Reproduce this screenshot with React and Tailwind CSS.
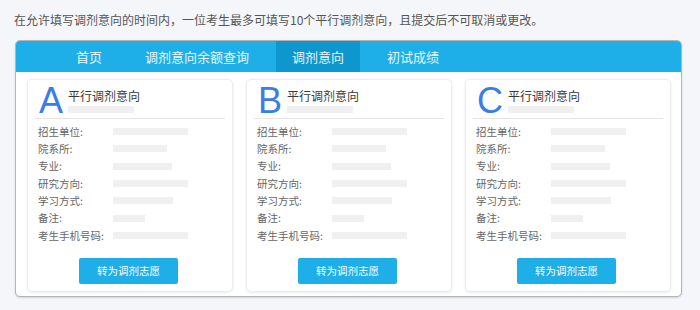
import React from "react";

const rows = [
  ["招生单位:", 75],
  ["院系所:", 54],
  ["专业:", 59],
  ["研究方向:", 75],
  ["学习方式:", 60],
  ["备注:", 32],
  ["考生手机号码:", 75],
];

function Card({ letter }) {
  return (
    <div className="w-[206px] h-[213px] bg-white rounded-[5px] border border-[#ececec] shadow-[0_1px_3px_rgba(0,0,0,0.08)] flex flex-col">
      <div className="mx-[7px] pt-[3px] h-[39px] border-b border-[#e6e6e6] flex items-start">
        <div
          className="ml-[4px] text-[36px] leading-[36px] h-[36px] text-[#3b7de3]"
          style={{ fontFamily: '"Liberation Sans", Arial, sans-serif' }}
        >
          {letter}
        </div>
        <div className="ml-[5px] flex flex-col pt-[5px]">
          <div className="text-[12px] leading-[16px] text-[#3a3a3a]">平行调剂意向</div>
          <div className="mt-[2px] w-[66px] h-[7px] bg-[#f0f0f0]" />
        </div>
      </div>
      <div className="pt-[4px] flex flex-col">
        {rows.map(([label, w]) => (
          <div key={label} className="h-[17.3px] flex items-center">
            <div className="pl-[10px] w-[85px] text-[10.5px] text-[#666] whitespace-nowrap">{label}</div>
            <div className="h-[7px] bg-[#f0f0f0]" style={{ width: w }} />
          </div>
        ))}
      </div>
      <div className="mt-[14px] ml-[51px] w-[99px] h-[26px] bg-[#1eaee8] rounded-[2px] flex items-center justify-center text-white text-[10.5px]">
        转为调剂志愿
      </div>
    </div>
  );
}

export default function App() {
  return (
    <div
      className="w-[700px] h-[310px] bg-[#f5f6fa] overflow-hidden"
      style={{ fontFamily: '"Noto Sans CJK SC", "Noto Sans", sans-serif' }}
    >
      <div className="pt-[11px] pl-[14px] text-[12px] leading-[18px] text-[#555] whitespace-nowrap">
        在允许填写调剂意向的时间内，一位考生最多可填写10个平行调剂意向，且提交后不可取消或更改。
      </div>
      <div className="mt-[11px] ml-[15px] w-[667px] h-[257px] bg-white border border-[#b5b5b5] rounded-[5px] shadow-[0_1px_2px_rgba(0,0,0,0.15)] overflow-hidden">
        <div className="h-[31px] bg-[#1eaee8] flex items-stretch pl-[44px] gap-[11px] text-[13px] text-white/90">
          <div className="px-[16px] flex items-center">首页</div>
          <div className="px-[16px] flex items-center">调剂意向余额查询</div>
          <div className="px-[16px] flex items-center bg-[#0e97ce]">调剂意向</div>
          <div className="px-[16px] flex items-center">初试成绩</div>
        </div>
        <div className="pt-[7px] pl-[11px] flex gap-[13px]">
          <Card letter="A" />
          <Card letter="B" />
          <Card letter="C" />
        </div>
      </div>
    </div>
  );
}
